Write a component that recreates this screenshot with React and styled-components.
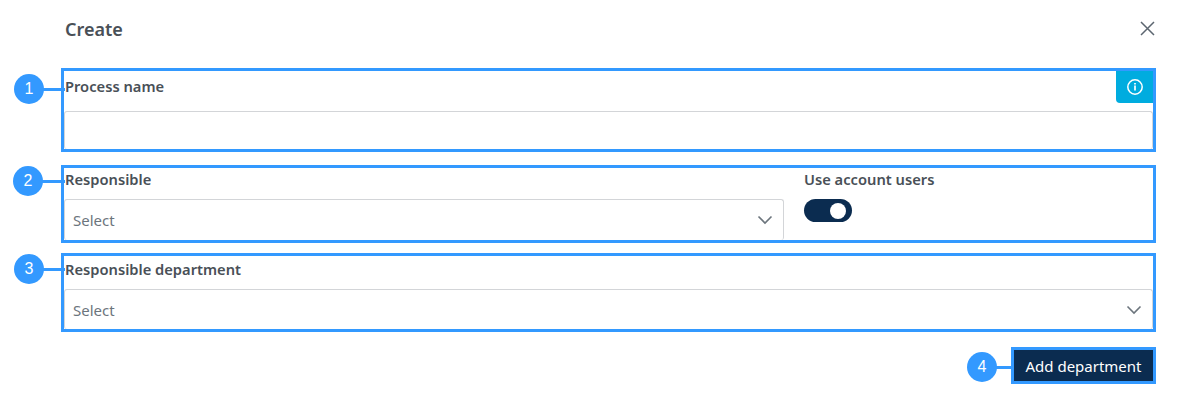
import React from "react";
import styled, { createGlobalStyle } from "styled-components";

const Global = createGlobalStyle`
  html, body { margin: 0; padding: 0; background: #fff; }
  body { font-family: "Noto Sans", "Open Sans", sans-serif; color: #495057; }
`;

const Page = styled.div`
  width: 1194px;
  height: 419px;
  box-sizing: border-box;
  padding: 0 38px 0 61px;
  overflow: hidden;
`;

const Header = styled.header`
  height: 57px;
  display: flex;
  align-items: center;
  justify-content: space-between;
  padding: 0 0 0 4px;
`;

const Title = styled.h2`
  margin: 0;
  font-size: 18px;
  line-height: 24px;
  font-weight: 600;
  color: #495057;
`;

const Close = styled.button`
  width: 16px;
  height: 16px;
  padding: 0;
  margin-right: 1px;
  border: 0;
  background: none;
  color: #5c6670;
  display: flex;
`;

const Frame = styled.section`
  position: relative;
  box-sizing: border-box;
  height: ${(p) => p.$h}px;
  margin-top: ${(p) => p.$mt}px;
  border: 3px solid #3399ff;
  display: flex;
  gap: 19px;
`;

const Field = styled.div`
  flex: ${(p) => p.$grow || "1 1 0"};
  display: flex;
  flex-direction: column;
  min-width: 0;
`;

const Label = styled.label`
  height: ${(p) => p.$h}px;
  margin-bottom: ${(p) => p.$mb}px;
  display: flex;
  align-items: center;
  padding-left: 1px;
  font-size: 14.7px;
  font-weight: 600;
  color: #495057;
`;

const Input = styled.div`
  flex: 1;
  box-sizing: border-box;
  border: 1px solid #d3d5d8;
  border-bottom: 0;
  border-radius: 3px;
  display: flex;
  align-items: center;
  justify-content: space-between;
  padding: 0 10px 0 8px;
  font-size: 15px;
  color: #6c757d;
`;

const Chevron = styled.svg`
  width: 16px;
  height: 10px;
  color: #6c757d;
  flex: none;
`;

const InfoButton = styled.div`
  position: absolute;
  top: 0;
  right: 0;
  width: 37px;
  height: 32px;
  padding-bottom: 1px;
  box-sizing: border-box;
  background: #00acdf;
  border-bottom-left-radius: 4px;
  display: flex;
  align-items: center;
  justify-content: center;
`;

const Toggle = styled.div`
  width: 48px;
  height: 23px;
  margin-left: 1px;
  border-radius: 12px;
  background: #0b2c50;
  display: flex;
  align-items: center;
  justify-content: flex-end;
  padding-right: 6px;
  box-sizing: border-box;
`;

const Knob = styled.span`
  width: 16px;
  height: 16px;
  border-radius: 50%;
  background: #fff;
`;

const Marker = styled.span`
  position: absolute;
  top: ${(p) => p.$top}px;
  left: ${(p) => p.$left}px;
  width: 30px;
  height: 30px;
  border-radius: 50%;
  background: #3399ff;
  color: #fff;
  font-size: 16px;
  display: flex;
  align-items: center;
  justify-content: center;
  font-family: "Liberation Sans", sans-serif;
  &::after {
    content: "";
    position: absolute;
    left: 29px;
    top: 13.5px;
    height: 3px;
    width: ${(p) => p.$line}px;
    background: #3399ff;
  }
`;

const Footer = styled.div`
  display: flex;
  justify-content: flex-end;
  margin-top: 15px;
`;

const ButtonWrap = styled.div`
  position: relative;
`;

const Button = styled.button`
  box-sizing: border-box;
  width: 145px;
  height: 37px;
  border: 3px solid #3399ff;
  background: #0b2c50;
  color: #fff;
  font-family: inherit;
  font-size: 15px;
  padding: 0;
`;

const ChevronIcon = () => (
  <Chevron viewBox="0 0 16 10" fill="none" stroke="currentColor" strokeWidth="1.6">
    <path d="M1.5 1.5 8 8l6.5-6.5" />
  </Chevron>
);

export default function App() {
  return (
    <Page>
      <Global />
      <Header>
        <Title>Create</Title>
        <Close aria-label="Close">
          <svg width="16" height="16" viewBox="0 0 16 16" fill="none" stroke="currentColor" strokeWidth="1.5">
            <path d="M2 1l13 13M15 1l-13 13" />
          </svg>
        </Close>
      </Header>

      <Frame $h={84} $mt={11}>
        <Marker $top={3} $left={-50} $line={22}>1</Marker>
        <Field>
          <Label $h={30} $mb={10}>Process name</Label>
          <Input />
        </Field>
        <InfoButton>
          <svg width="16" height="16" viewBox="0 0 16 16" fill="none" stroke="#fff" strokeWidth="1.5">
            <circle cx="8" cy="8" r="7.2" />
            <path d="M8 4v1.4M8 6.6v5" strokeWidth="1.7" />
          </svg>
        </InfoButton>
      </Frame>

      <Frame $h={78} $mt={13}>
        <Marker $top={-2} $left={-51} $line={23}>2</Marker>
        <Field $grow="0 0 720px">
          <Label $h={22} $mb={9}>Responsible</Label>
          <Input>
            Select
            <ChevronIcon />
          </Input>
        </Field>
        <Field>
          <Label $h={22} $mb={9}>Use account users</Label>
          <Toggle>
            <Knob />
          </Toggle>
        </Field>
      </Frame>

      <Frame $h={79} $mt={10}>
        <Marker $top={-2} $left={-50} $line={22}>3</Marker>
        <Field>
          <Label $h={26} $mb={7}>Responsible department</Label>
          <Input>
            Select
            <ChevronIcon />
          </Input>
        </Field>
      </Frame>

      <Footer>
        <ButtonWrap>
          <Marker $top={5} $left={-44} $line={16}>4</Marker>
          <Button>Add department</Button>
        </ButtonWrap>
      </Footer>
    </Page>
  );
}
